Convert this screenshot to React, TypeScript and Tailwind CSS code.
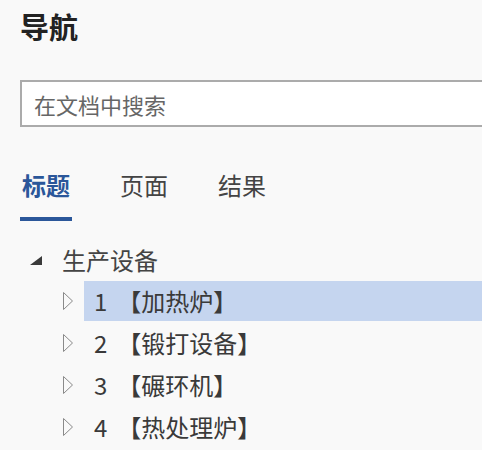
const font = { fontFamily: '"Noto Sans CJK SC", "Noto Sans", sans-serif' };

const items = [
  { num: "1", name: "【加热炉】", active: true },
  { num: "2", name: "【锻打设备】", active: false },
  { num: "3", name: "【碾环机】", active: false },
  { num: "4", name: "【热处理炉】", active: false },
];

const tabs = [
  { label: "标题", active: true },
  { label: "页面", active: false },
  { label: "结果", active: false },
];

function CollapsedArrow() {
  return (
    <svg width="12" height="20" viewBox="0 0 12 20" className="shrink-0">
      <path d="M1.5 1.5 L10.5 10 L1.5 18.5 Z" fill="none" stroke="#8a8a8a" strokeWidth="1" />
    </svg>
  );
}

function ExpandedArrow() {
  return (
    <svg width="12" height="9" viewBox="0 0 12 9" className="shrink-0">
      <path d="M12 0 L12 9 L0 9 Z" fill="#3a3a3a" />
    </svg>
  );
}

export default function App() {
  return (
    <div className="min-h-screen w-[482px] h-[450px] overflow-hidden bg-[#f9f9f9]" style={font}>
      {/* Header */}
      <div className="h-[52px] pl-5 flex items-center">
        <h1 className="text-[29px] font-bold text-[#222] leading-none">导航</h1>
      </div>

      {/* Search */}
      <div className="mt-[28px] pl-5">
        <div className="h-[47px] border-2 border-r-0 border-[#ababab] bg-white flex items-center pl-3">
          <span className="text-[22px] text-[#666] leading-none">在文档中搜索</span>
        </div>
      </div>

      {/* Tabs */}
      <div className="mt-[46px] pl-5 flex gap-[46px]">
        {tabs.map((t) => (
          <div key={t.label} className="w-[52px] flex flex-col items-center">
            <span
              className={
                t.active
                  ? "text-[24px] leading-[24px] font-bold text-[#2b579a]"
                  : "text-[24px] leading-[24px] text-[#444]"
              }
            >
              {t.label}
            </span>
            <div className={t.active ? "mt-[20px] h-[4px] w-full bg-[#2b579a]" : "mt-[20px] h-[4px] w-full"} />
          </div>
        ))}
      </div>

      {/* Tree */}
      <div className="mt-[19px]">
        <div className="h-10 flex items-center pl-[30px]">
          <ExpandedArrow />
          <span className="ml-5 text-[24px] leading-none text-[#444]">生产设备</span>
        </div>
        <div className="mt-px flex flex-col gap-[2px]">
          {items.map((it) => (
            <div key={it.num} className="h-10 flex items-center pl-[62px]">
              <CollapsedArrow />
              <div
                className={
                  it.active
                    ? "ml-[10px] flex-1 h-10 flex items-center pl-[10px] bg-[#c5d5ef]"
                    : "ml-[10px] flex-1 h-10 flex items-center pl-[10px]"
                }
              >
                <span className="text-[24px] leading-none text-[#3a3a3a]">{it.num}</span>
                <span className="ml-[10px] text-[24px] leading-none text-[#3a3a3a]">{it.name}</span>
              </div>
            </div>
          ))}
        </div>
      </div>
    </div>
  );
}
